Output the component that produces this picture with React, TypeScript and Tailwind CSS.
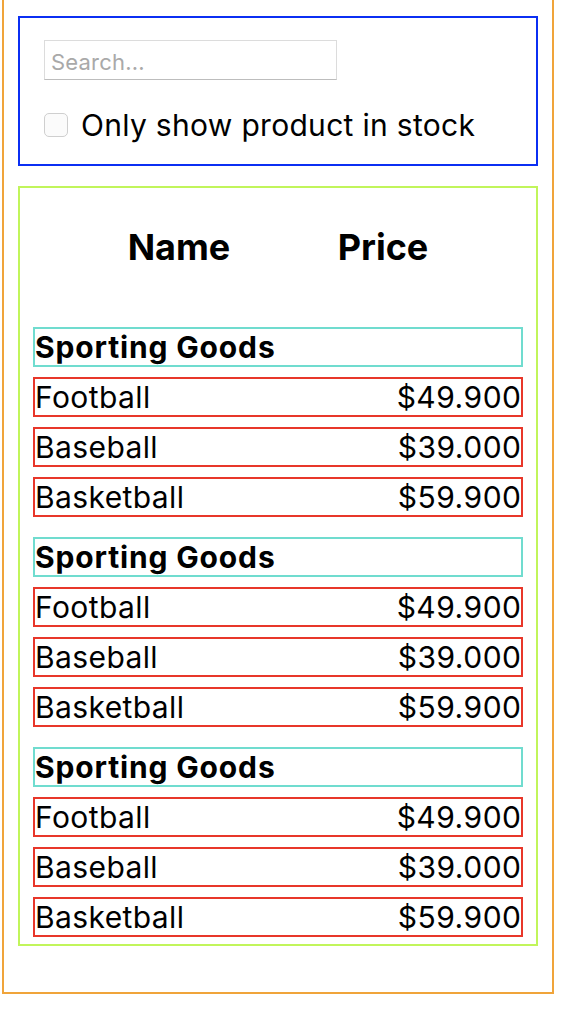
import React from "react";

const products = [
  { name: "Football", price: "$49.900" },
  { name: "Baseball", price: "$39.000" },
  { name: "Basketball", price: "$59.900" },
];

export default function App() {
  return (
    <div
      className="w-[564px] h-[1022px] bg-white text-black"
      style={{ fontFamily: 'Inter, "Noto Sans", sans-serif' }}
    >
      <div className="mx-[2px] w-[552px] border-x-2 border-b-2 border-[#f0a43a] px-[14px] pt-[16px] pb-[46px]">
        <div className="border-2 border-[#0b2ff3] pl-[24px] pt-[22px] h-[150px]">
          <div className="w-[293px] h-[40px] border border-[#dcdcdc] border-b-[#bdbdbd] flex items-center pl-[6px] pt-[3px]">
            <span className="text-[22px] text-[#a9a9a9] leading-none tracking-[0.2px]">Search...</span>
          </div>
          <div className="flex items-center mt-[29px] h-[32px]">
            <div className="w-[24px] h-[24px] rounded-[5px] border border-[#cfcfcf] bg-[#fbfbfb]" />
            <span className="ml-[13px] text-[30px] leading-none tracking-[0.3px]">Only show product in stock</span>
          </div>
        </div>
        <div className="mt-[20px] border-2 border-[#c1f55b] px-[13px] pt-[39px] pb-[7px]">
          <div className="grid grid-cols-[292px_116px] h-[40px] items-center">
            <div className="text-center text-[36px] font-bold leading-none">Name</div>
            <div className="text-center text-[36px] font-bold leading-none">Price</div>
          </div>
          <div className="mt-[60px] flex flex-col gap-[20px]">
            {[0, 1, 2].map((g) => (
              <div key={g} className="flex flex-col gap-[10px]">
                <div className="h-[40px] border-2 border-[#70dccf] flex items-center text-[30px] font-bold leading-none tracking-[0.85px]">
                  Sporting Goods
                </div>
                {products.map((p) => (
                  <div
                    key={p.name}
                    className="h-[40px] border-2 border-[#e8372a] flex items-center justify-between text-[30px] leading-none tracking-[0.4px]"
                  >
                    <span>{p.name}</span>
                    <span className="tracking-[0.5px] mr-[-0.5px]">{p.price}</span>
                  </div>
                ))}
              </div>
            ))}
          </div>
        </div>
      </div>
    </div>
  );
}
